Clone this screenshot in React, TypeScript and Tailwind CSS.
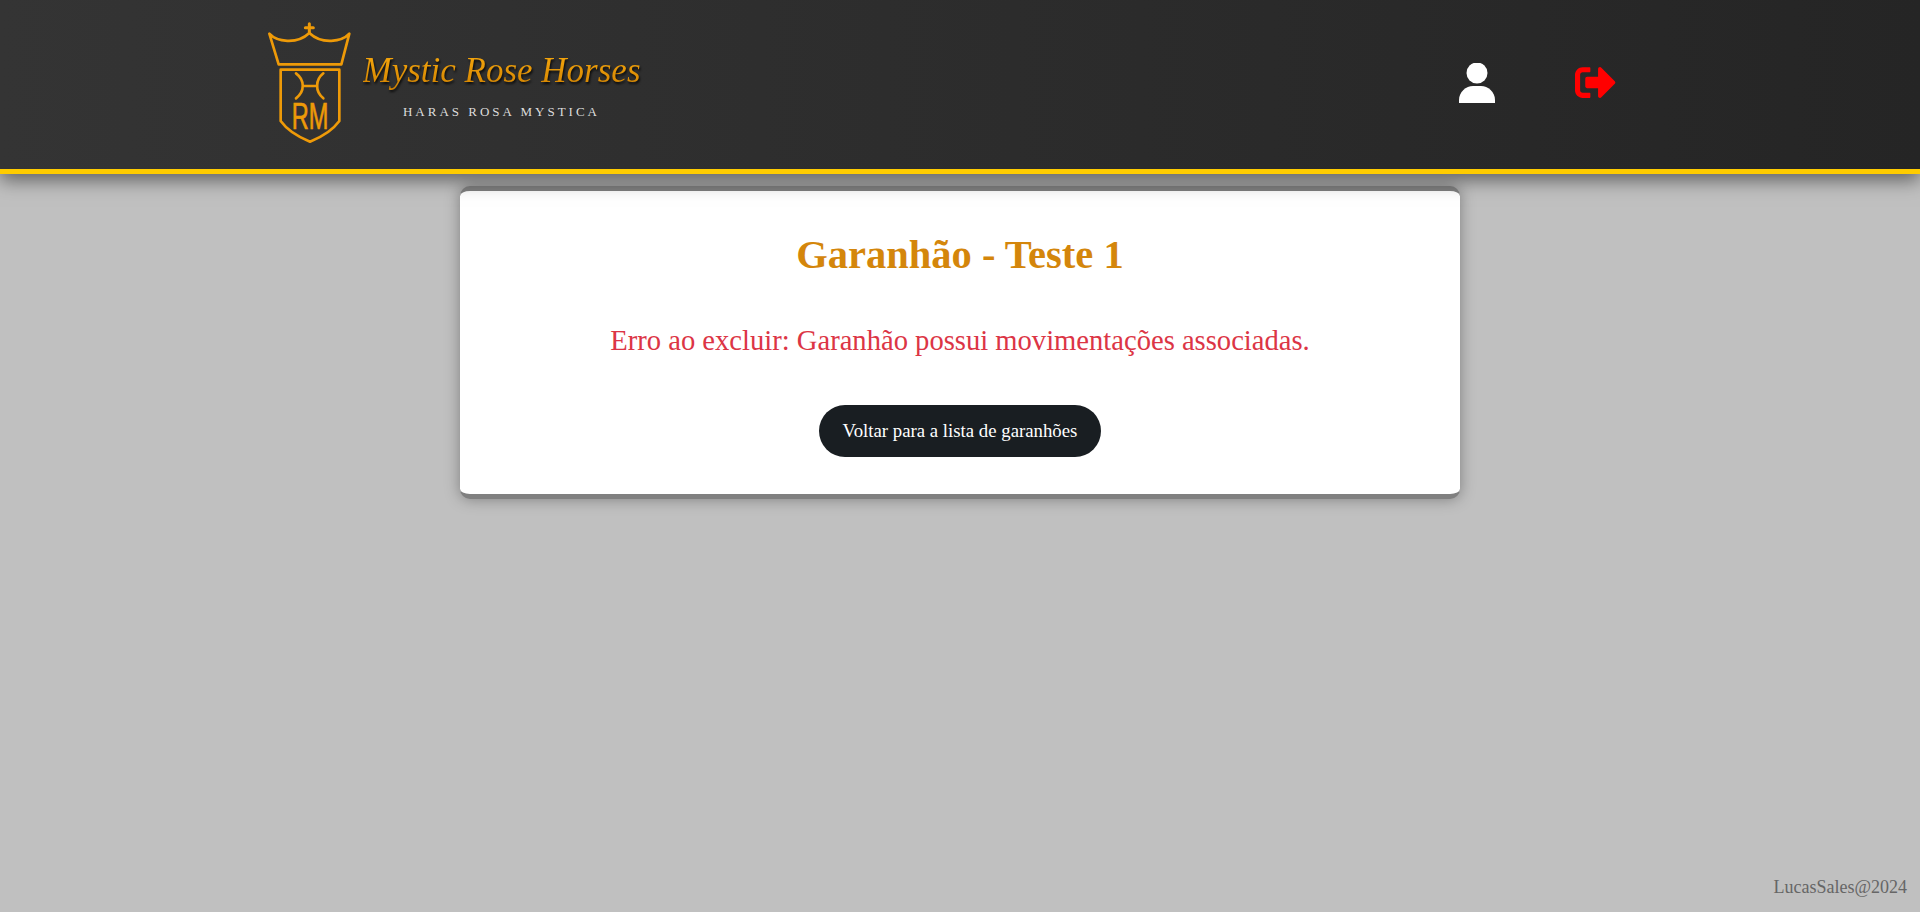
import React from "react";
import { FaSignOutAlt } from "react-icons/fa";

function Emblem() {
  return (
    <svg viewBox="0 0 300 405" className="w-[100px] h-[135px] shrink-0">
      <g fill="none" stroke="#ee9a08" strokeWidth="8" strokeLinecap="round" strokeLinejoin="round">
        <path d="M148 26V52M136 38H160" strokeWidth="9" />
        <path d="M28 56C50 80 110 90 148 54C186 90 246 80 268 56L244 148H56Z" />
        <path d="M62 164H238V318C215 350 180 368 150 380C120 368 85 350 62 318Z" />
        <path d="M108 175C135 195 135 230 108 250M190 175C165 195 165 230 190 250M128 213H172" />
      </g>
      <text x="95" y="343" fontSize="110" fill="#ee9a08" stroke="#ee9a08" strokeWidth="2" fontFamily="Liberation Sans, sans-serif" textLength="110" lengthAdjust="spacingAndGlyphs">RM</text>
    </svg>
  );
}

function UserIcon() {
  return (
    <svg viewBox="0 0 36 40" className="w-[36px] h-[40px] text-white" fill="currentColor">
      <circle cx="18" cy="10" r="10.5" />
      <path d="M0 40V37C0 29 7 23 14 23H22C29 23 36 29 36 37V40Z" />
    </svg>
  );
}

export default function App() {
  return (
    <div className="min-h-[912px] bg-[#c0c0c0] flex flex-col font-['Liberation_Serif',serif]">
      <header className="relative z-10 h-[174px] shrink-0 bg-gradient-to-r from-[#343434] to-[#252525] border-b-[5px] border-[#ffcc00] shadow-[0_6px_18px_rgba(0,0,0,0.5)] flex items-start justify-between pl-[260px] pr-[304px] pt-[15px]">
        <div className="flex items-start">
          <Emblem />
          <div className="ml-[3px] w-[277px] flex flex-col items-center">
            <div className="mt-[31px] text-[35px] leading-[50px] italic whitespace-nowrap bg-gradient-to-b from-[#ffb010] to-[#c87a00] bg-clip-text text-transparent drop-shadow-[1px_2px_1px_rgba(0,0,0,0.8)]">
              Mystic Rose Horses
            </div>
            <div className="mt-[9px] text-[13px] leading-[14px] tracking-[3px] text-[#dddddd] whitespace-nowrap">
              HARAS ROSA MYSTICA
            </div>
          </div>
        </div>
        <div className="flex items-center gap-[80px] pt-[47px]">
          <UserIcon />
          <FaSignOutAlt className="w-[41px] h-[41px] text-[#ff0000]" />
        </div>
      </header>

      <main className="w-[1000px] mx-auto mt-[12px] bg-white border-y-[5px] border-[#808080] rounded-[10px] shadow-[0_0_15px_rgba(0,0,0,0.35)] h-[313px] flex flex-col items-center pt-[40px]">
        <h1 className="text-[40.5px] leading-[48px] font-bold text-[#d4860b]">Garanhão - Teste 1</h1>
        <p className="mt-[44px] text-[28.6px] leading-[36px] text-[#dc3545]">
          Erro ao excluir: Garanhão possui movimentações associadas.
        </p>
        <button className="mt-[46px] h-[52px] w-[282px] rounded-full bg-[#191e22] text-white text-[18.8px]">
          Voltar para a lista de garanhões
        </button>
      </main>

      <footer className="mt-auto flex justify-end pr-[13px] pb-[15px] text-[18px] leading-[20px] text-[#666666]">
        LucasSales@2024
      </footer>
    </div>
  );
}
